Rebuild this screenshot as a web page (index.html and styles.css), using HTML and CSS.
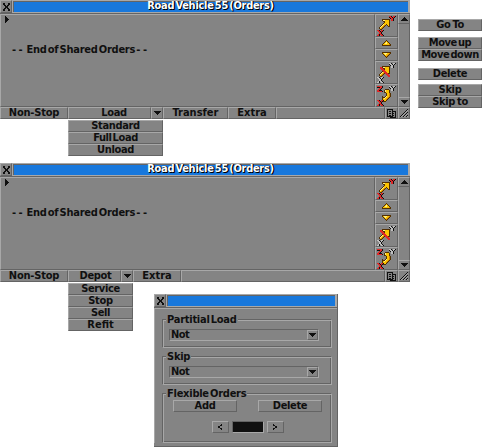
FILE: index.html
```
<!DOCTYPE html>
<html lang="en">
<head>
<meta charset="utf-8">
<title>Road Vehicle Orders</title>
<link rel="stylesheet" href="styles.css">
</head>
<body>
<main class="desk">
  <div class="top">
    <section class="window">
      <header class="titlebar"><button class="close"><i data-icon="close"></i></button><h1 class="title"><span class="name">Road Vehicle 55 (Orders)</span></h1></header>
      <div class="content">
        <div class="orders"><i class="marker" data-icon="right"></i><p class="end"><span class="dash">--</span> End of Shared Orders <span class="dash">--</span></p></div>
        <div class="tools"><b class="cell"><i data-icon="goto"></i></b><b class="cell small"><i data-icon="up"></i></b><b class="cell small"><i data-icon="down"></i></b><b class="cell"><i data-icon="remove"></i></b><b class="cell"><i data-icon="skip"></i></b></div>
        <div class="scroll"><b class="cell"><i data-icon="blackUp"></i></b><span class="track"></span><b class="cell"><i data-icon="blackDown"></i></b></div>
      </div>
      <footer class="bar load"><button class="btn"><span class="t nonstop">Non-Stop</span></button><button class="btn load-label"><span class="t">Load</span></button><button class="btn"><i data-icon="blackDown"></i></button><button class="btn"><span class="t wide">Transfer</span></button><button class="btn"><span class="t wide">Extra</span></button><span class="btn"></span><button class="btn"><i data-icon="doc"></i></button><span class="btn"><i data-icon="grip"></i></span></footer>
    </section>
    <nav class="side">
      <div class="group"><button class="btn"><span class="t">Go To</span></button></div>
      <div class="group"><button class="btn"><span class="t tight">Move up</span></button><button class="btn"><span class="t tight">Move down</span></button></div>
      <div class="group"><button class="btn"><span class="t">Delete</span></button></div>
      <div class="group last"><button class="btn"><span class="t">Skip</span></button><button class="btn"><span class="t">Skip to</span></button></div>
    </nav>
  </div>
  <div class="menu load-menu"><button class="btn"><span class="t">Standard</span></button><button class="btn"><span class="t tight">Full Load</span></button><button class="btn"><span class="t">Unload</span></button></div>
  <section class="window second">
    <header class="titlebar"><button class="close"><i data-icon="close"></i></button><h1 class="title"><span class="name">Road Vehicle 55 (Orders)</span></h1></header>
    <div class="content">
      <div class="orders"><i class="marker" data-icon="right"></i><p class="end"><span class="dash">--</span> End of Shared Orders <span class="dash">--</span></p></div>
      <div class="tools"><b class="cell"><i data-icon="goto"></i></b><b class="cell small"><i data-icon="up"></i></b><b class="cell small"><i data-icon="down"></i></b><b class="cell"><i data-icon="remove"></i></b><b class="cell"><i data-icon="skip"></i></b></div>
      <div class="scroll"><b class="cell"><i data-icon="blackUp"></i></b><span class="track"></span><b class="cell"><i data-icon="blackDown"></i></b></div>
    </div>
    <footer class="bar depot"><button class="btn"><span class="t nonstop">Non-Stop</span></button><button class="btn depot-label"><span class="t">Depot</span></button><button class="btn"><i data-icon="blackDown"></i></button><button class="btn"><span class="t wide">Extra</span></button><span class="btn"></span><button class="btn"><i data-icon="doc"></i></button><span class="btn"><i data-icon="grip"></i></span></footer>
  </section>
  <div class="lower">
    <div class="menu depot-menu"><button class="btn"><span class="t">Service</span></button><button class="btn"><span class="t">Stop</span></button><button class="btn"><span class="t">Sell</span></button><button class="btn"><span class="t wide">Refit</span></button></div>
    <section class="dialog">
      <header class="titlebar"><button class="close"><i data-icon="close"></i></button><div class="title"></div></header>
      <div class="groups">
        <div class="box"><span class="legend">Partitial Load</span><div class="select"><span class="value">Not</span><b class="drop"><i data-icon="blackDown"></i></b></div></div>
        <div class="box"><span class="legend">Skip</span><div class="select"><span class="value">Not</span><b class="drop"><i data-icon="blackDown"></i></b></div></div>
        <div class="box flexible"><span class="legend">Flexible Orders</span>
          <div class="actions"><button class="btn"><span class="t">Add</span></button><button class="btn"><span class="t">Delete</span></button></div>
          <div class="stepper"><button class="btn"><i data-icon="less"></i></button><span class="screen"></span><button class="btn"><i data-icon="more"></i></button></div>
        </div>
      </div>
    </section>
  </div>
</main>
<script src="icons.js"></script>
</body>
</html>
```
FILE: styles.css
```
* { box-sizing: border-box; }
:root { --face: #848484; --light: #a8a8a8; --dark: #646464; --ink: #101010; --blue: #1878dc; }
body { margin: 0; background: #fff; color: var(--ink); font: bold 11px/10px "DejaVu Sans Condensed", "DejaVu Sans", sans-serif; }
button { padding: 0; margin: 0; font: inherit; color: inherit; border-radius: 0; }
h1, p { margin: 0; font: inherit; }
.desk { width: 482px; height: 447px; overflow: hidden; }
.top { display: flex; justify-content: space-between; height: 119px; }
.window { width: 410px; height: 119px; display: flex; flex-direction: column; background: var(--face); }
.second { margin-top: 7px; }
i { display: flex; flex: none; }
i svg { display: block; }

.btn, .cell, .close, .drop {
  display: flex; align-items: center; justify-content: center;
  background: var(--face); border: 1px solid;
  border-color: var(--light) var(--dark) var(--dark) var(--light);
}
.t { white-space: nowrap; letter-spacing: -.35px; word-spacing: -1px; }
.t.nonstop { letter-spacing: -.2px; }
.t.wide { letter-spacing: 0; }
.t.tight { letter-spacing: -.4px; word-spacing: -2px; }
.load-label { padding-left: 9px; }
.depot-label { padding-left: 2px; }

.titlebar { display: flex; height: 14px; flex: none; border-bottom: 1px solid var(--dark); }
.close { width: 12px; }
.title { flex: 1; background: var(--blue); border: solid var(--light); border-width: 1px 2px 1px 1px; box-shadow: inset 1px 1px var(--dark); display: flex; justify-content: center; color: #fff; text-shadow: 1px 1px #000, 1px 0 #000; }
.name { white-space: nowrap; letter-spacing: -.28px; word-spacing: -2px; }

.content { display: flex; height: 93px; }
.orders { flex: 1; border: 1px solid; border-color: var(--light) var(--dark) var(--dark) var(--light); padding: 1px 0 0 4px; }
.end { margin: 22px 0 0 7px; white-space: nowrap; letter-spacing: -.25px; word-spacing: -2px; }
.dash { letter-spacing: 2.5px; }
.tools { width: 23px; display: flex; flex-direction: column; }
.cell { height: 23px; flex: none; }
.cell.small { height: 12px; }
.scroll { width: 12px; display: flex; flex-direction: column; }
.scroll .cell { height: 10px; }
.track { flex: 1; border: solid; border-width: 0 1px; border-color: var(--dark) var(--dark) var(--dark) var(--light); }

.bar { display: grid; height: 12px; }
.load { grid-template-columns: 68px 83px 12px 65px 48px 109px 13px 12px; }
.depot { grid-template-columns: 68px 53px 12px 48px 204px 13px 12px; }

.side { width: 64px; padding-top: 19px; }
.group { margin-bottom: 6px; }
.group + .group + .group { margin-top: 7px; margin-bottom: 4px; }
.group.last.last { margin-top: 0; }
.side .btn, .menu .btn { width: 100%; height: 12px; }
.menu { margin-left: 68px; }
.load-menu { width: 95px; margin-top: 1px; }
.depot-menu { width: 65px; margin-top: 1px; }

.lower { display: flex; }
.dialog { width: 184px; height: 153px; margin: 12px 0 0 21px; background: var(--face); border-right: 1px solid var(--dark); border-bottom: 1px solid var(--dark); }
.groups { border: solid var(--light); border-width: 1px 0 0 1px; padding: 10px 5px 0 7px; }
.box { width: 170px; height: 29px; margin-bottom: 8px; position: relative; border: 1px solid; border-color: var(--dark) var(--light) var(--light) var(--dark); box-shadow: inset 1px 1px var(--light), inset -1px -1px var(--dark); padding: 9px 0 0 6px; }
.flexible { height: 50px; padding: 6px 9px 0 10px; }
.legend { position: absolute; left: 3px; top: -5px; line-height: 9px; padding: 0 1px; background: var(--face); white-space: nowrap; letter-spacing: -.25px; word-spacing: -2px; }
.select { width: 150px; height: 12px; display: flex; justify-content: space-between; border: 1px solid; border-color: var(--dark) var(--light) var(--light) var(--dark); }
.value { padding-left: 1px; letter-spacing: -.6px; }
.drop { width: 11px; height: 10px; }
.actions { display: flex; justify-content: space-between; }
.actions .btn { width: 64px; height: 12px; }
.stepper { display: flex; justify-content: center; gap: 3px; margin-top: 9px; }
.stepper .btn { width: 17px; height: 12px; }
.screen { width: 32px; height: 12px; background: var(--ink); border: 1px solid; border-color: var(--dark) var(--light) var(--light) var(--dark); }
```
FILE: icons.js
```
// Pixel icons: one character per pixel, drawn as SVG squares.
const colors = { K: '#101010', R: '#e02828', Y: '#fcc400', W: '#fcf08c', O: '#d08000', G: '#c0c0c0', B: '#543000', L: '#a8a8a8' };
const icons = {
  close: ['KK...KK', 'KK...KK', '.KK.KK.', '..KKK..', '..KKK..', '.KK.KK.', 'KK...KK', 'KK...KK'],
  right: ['K...', 'KK..', 'KKK.', 'KKKK', 'KKK.', 'KK..', 'K...'],
  blackUp: ['...K...', '..KKK..', '.KKKKK.', 'KKKKKKK'],
  blackDown: ['KKKKKKK', '.KKKKK.', '..KKK..', '...K...'],
  less: ['...K', '..KK', 'KK..', 'KK..', '..KK', '...K'],
  more: ['K...', 'KK..', '..KK', '..KK', 'KK..', 'K...'],
  up: ['....B....', '...BYB...', '..BYWYB..', '.BYWWYYB.', 'BYYYYYYOB', 'BBBBBBBBB'],
  down: ['BBBBBBBBB', 'BYWWWYYOB', '.BYWYYOB.', '..BYYOB..', '...BOB...', '....B....'],
  doc: ['KKKKKK...', 'K....K...', 'K.KK.KKKK', 'K....K..K', 'K.KK.KK.K', 'K....K..K', 'K.KK.KK.K', 'KKKKKK..K', '...KKKKKK'],
  grip: ['.......K', '......KL', '.....KL.', '....KL.K', '...KL.KL', '..KL.KL.', '.KL.KL.K', 'KL.KL.KL'],
  goto: [
    '.............RRK.RRK.', '.............KRRKRK..', '..............KRRK...', '......BBBBBBBB.RRK...',
    '......BWWYYYYB.RRK...', '.......BBYYYYB.......', '........BYYYYB.......', '.......BYYYYYB.......',
    '......BWYYBYYB.......', '.....BWYOB.BYB.......', '....BWYOB...BB.......', '...BWYOB.............',
    '...BYOB..............', '....BB...............', '.RRK.RRK.............', '..RRKRK..............',
    '...RRK...............', '...RRK...............', '..RKRRK..............', '.RRK.RRK.............'],
  remove: [
    '.............GGK.GGK.', '.............KGGKGK..', '..............KGGK...', '......BBBBBBBB.GGK...',
    '....RRBWWYYYYB.GGK...', '....RRRBBYYYYB.......', '.....RRRBYYYYB.......', '......RRRYYYYB.......',
    '......BRRRYYYB.......', '.....BWYRRRYYB.......', '....BWYOBRRRBB.......', '...BWYOB..RRR........',
    '...BYOB....RRR.......', '....BB......RR.......', '.GGK.GGK.............', '..GGKGK..............',
    '...GGK...............', '...GGK...............', '..GKGGK..............', '.GGK.GGK.............'],
  skip: [
    '.RRRRRK......GGK.GGK.', '.KKKRRK......KGGKGK..', '...RRK........KGGK...', '..RRK....BBBB..GGK...',
    '.RRKKK..BWYYYB.GGK...', '.RRRRRK.BWYYYB.......', '........BBYYYB.......', '..........BYYOB......',
    '..........BYYOB......', '..........BYYOB......', '......B..BWYYOB......', '......BBBWYYOB.......',
    '......BYWYYOB........', '......BYYYOB.........', '.RRK.RRKYYB..........', '..RRKRKBBB...........',
    '...RRK...............', '...RRK...............', '..RKRRK..............', '.RRK.RRK.............']
};
document.querySelectorAll('[data-icon]').forEach(el => {
  const rows = icons[el.dataset.icon];
  const w = rows[0].length, h = rows.length;
  let out = '';
  rows.forEach((row, y) => [...row].forEach((c, x) => {
    if (c !== '.') out += `<rect x="${x}" y="${y}" width="1" height="1" fill="${colors[c]}"/>`;
  }));
  el.innerHTML = `<svg width="${w}" height="${h}" viewBox="0 0 ${w} ${h}" shape-rendering="crispEdges" aria-hidden="true">${out}</svg>`;
});
```
